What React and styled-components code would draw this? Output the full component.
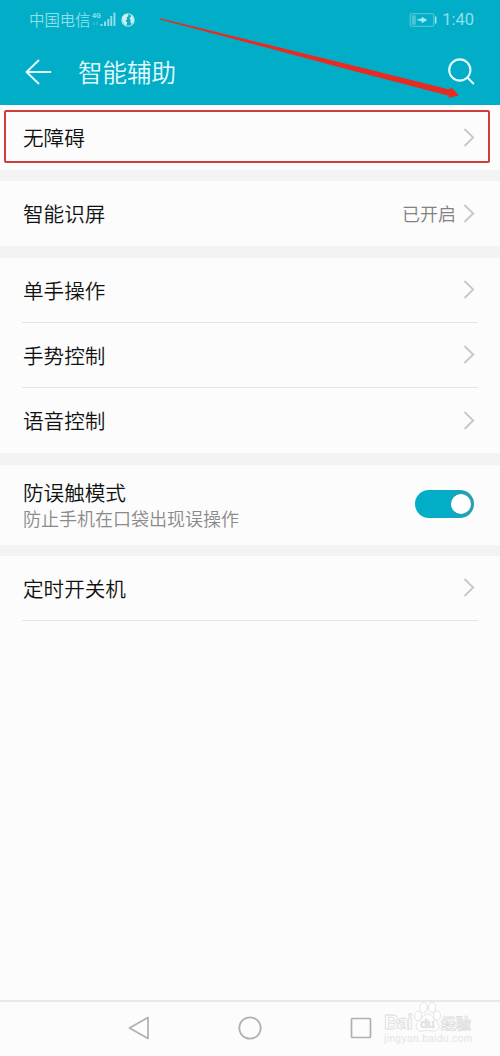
import React, { useState } from 'react'
import styled, { createGlobalStyle } from 'styled-components'

const GlobalStyle = createGlobalStyle`
  * {
    box-sizing: border-box;
  }
  body {
    margin: 0;
    background: #fcfcfc;
    font-family: 'Noto Sans CJK SC', sans-serif;
  }
`

const Screen = styled.div`
  position: relative;
  display: flex;
  flex-direction: column;
  width: 500px;
  height: 1056px;
  overflow: hidden;
  background: #fcfcfc;
`

const Header = styled.header`
  height: 105px;
  background: #02adc7;
  color: #e4fbfd;
`

const StatusBar = styled.div`
  display: flex;
  align-items: center;
  height: 39px;
  padding: 0 26px 0 29px;
  color: #8fe0ea;
`

const Carrier = styled.span`
  width: 63px;
  padding-bottom: 2px;
  font-size: 15.4px;
  font-weight: 350;
  line-height: 20px;
  white-space: nowrap;
`

const Clock = styled.span`
  margin-left: 5px;
  font-family: Roboto, sans-serif;
  font-size: 16.5px;
  line-height: 20px;
`

const Spacer = styled.div`
  flex: 1;
`

const TitleBar = styled.div`
  display: flex;
  align-items: center;
  height: 66px;
  padding: 0 25px 1px 24px;
`

const Title = styled.h1`
  flex: 1;
  margin: 0 0 0 26px;
  font-size: 24.5px;
  font-weight: 350;
  line-height: 36px;
`

const Group = styled.section`
  padding: 0 22px;
  border-top: ${props => props.gap || 0}px solid #f3f3f3;
`

const Row = styled.div`
  display: flex;
  align-items: center;
  height: ${props => props.height}px;
  padding-right: ${props => props.inset || 0}px;
  padding-bottom: ${props => props.lift || 0}px;
  border-bottom: ${props => (props.line ? '1.5px solid #e5e5e5' : 'none')};
`

const Texts = styled.div`
  flex: 1;
  padding-bottom: ${props => props.lift || 0}px;
`

const Label = styled.div`
  padding-left: 1px;
  font-size: 20.6px;
  font-weight: 350;
  line-height: 28px;
  color: #111;
`

const Hint = styled.div`
  padding-left: 1px;
  font-size: 18px;
  font-weight: 350;
  line-height: 25px;
  color: #8a8a8a;
`

const Value = styled.span`
  margin-right: 7px;
  padding-bottom: 2px;
  font-size: 18px;
  font-weight: 350;
  line-height: 26px;
  color: #828282;
`

const Toggle = styled.button`
  display: flex;
  align-items: center;
  justify-content: ${props => (props.on ? 'flex-end' : 'flex-start')};
  width: 59px;
  height: 28px;
  padding: 0 3px;
  border: 0;
  border-radius: 14px;
  background: ${props => (props.on ? 'linear-gradient(90deg, #02adc7 50%, #2b9ead)' : '#c8c8c8')};
`

const Knob = styled.span`
  width: 20px;
  height: 20px;
  border-radius: 50%;
  background: #fff;
`

const NavBar = styled.nav`
  display: flex;
  align-items: center;
  justify-content: center;
  gap: 87px;
  height: 56px;
  margin-top: auto;
  padding-bottom: 2px;
  border-top: 2px solid #e8e8e8;
`

const Highlight = styled.div`
  position: absolute;
  left: 4px;
  top: 110px;
  width: 486px;
  height: 53px;
  border: 2px solid #d03c38;
  border-radius: 2px;
`

const Pointer = styled.svg`
  position: absolute;
  left: 158px;
  top: 16px;
`

const Watermark = styled.svg`
  position: absolute;
  left: 383px;
  top: 1001px;
`

function SignalIcon() {
  return (
    <svg width="24" height="20" viewBox="0 0 24 20" fill="#8fe0ea">
      <text x="0" y="7.5" fontFamily="Roboto, sans-serif" fontSize="7" fontWeight="700">4G</text>
      <path d="M2 12v3M5 12v3" stroke="#4cc5d6" strokeWidth="1" />
      <path d="M8.5 14h2v2h-2zM12 11.500h2v4.500h-2zM15.300 9h1.900v7h-1.900zM18.300 6h1.900v10h-1.900zM21.500 2.500h1.900V16h-1.900z" />
    </svg>
  )
}

function GlobeIcon() {
  return (
    <svg width="14" height="14" viewBox="0 0 14 14" style={{ marginLeft: 5 }}>
      <circle cx="7" cy="7" r="6.200" fill="#17a9c0" stroke="#a5e8ef" strokeWidth="1.100" />
      <path d="M1 4.500 3.500 1.500 6.700 1 7.500 3 5.500 4.400 6.200 6.200 4.500 7.600 6.200 9.800 5.500 12.800 3 11 1.200 7.500z" fill="#c5f3f7" />
      <path d="M9.500 1.500 12.500 4.500 13 8 11 11.300 9.300 9 9.800 7 8.300 5.300 10 3.800z" fill="#c5f3f7" />
    </svg>
  )
}

function BatteryIcon() {
  return (
    <svg width="28" height="14" viewBox="0 0 28 14" fill="none">
      <rect x="1.200" y="0.700" width="23.600" height="12.600" rx="1.500" stroke="#5ccbd9" strokeWidth="1.100" />
      <rect x="2.800" y="2.300" width="4" height="9.400" fill="#4dc5d5" />
      <path d="M7.500 7 13 5v-1.300L18.300 7l-5.500 3.300V8.500z" fill="#a1e8ef" />
      <path d="M26.700 3.500v7" stroke="#a1e8ef" strokeWidth="1.500" />
    </svg>
  )
}

function BackIcon() {
  return (
    <svg width="28" height="28" viewBox="0 0 28 28" fill="none" stroke="currentColor" strokeWidth="1.900" strokeLinecap="round" strokeLinejoin="round">
      <path d="M14.500 2.500 2.500 14l12 11.500M2.500 14H26.500" />
    </svg>
  )
}

function SearchIcon() {
  return (
    <svg width="28" height="28" viewBox="0 0 28 28" fill="none" stroke="currentColor" strokeWidth="2.100" strokeLinecap="round">
      <circle cx="12.800" cy="12" r="10.600" />
      <path d="M20.300 19.500l6 6" />
    </svg>
  )
}

function Chevron() {
  return (
    <svg width="12" height="20" viewBox="0 0 12 20" fill="none" stroke="#c6c6c6" strokeWidth="1.800">
      <path d="M1.500 1 10.200 9.500 1.500 18" />
    </svg>
  )
}

function ArrowRow({ label, value, line, height }) {
  return (
    <Row height={height} line={line} inset={3}>
      <Texts lift={line ? 0 : 2}>
        <Label>{label}</Label>
      </Texts>
      {value && <Value>{value}</Value>}
      <Chevron />
    </Row>
  )
}

function BrandMark() {
  return (
    <Watermark width="94" height="46" viewBox="0 0 94 46" fill="#fefefe" stroke="#dcdcdc" strokeWidth="0.800">
      <g fontFamily="Liberation Sans, sans-serif" fontWeight="700">
        <text x="1" y="28" fontSize="20.500" textLength="29">Bai</text>
        <text x="58" y="27.500" fontSize="15" fontFamily="Noto Sans CJK SC, sans-serif" textLength="30">经验</text>
        <ellipse cx="35" cy="15" rx="3.600" ry="4.800" />
        <ellipse cx="40.500" cy="6.500" rx="3.700" ry="5" />
        <ellipse cx="49" cy="6.500" rx="3.700" ry="5" />
        <ellipse cx="54" cy="14.500" rx="3.500" ry="4.700" />
        <path d="M44.500 13c-4 0-5 4-8 6.500-3 2.500-4.500 5.500-2.500 8.500 2.500 3.500 7 1.500 10.500 1.500s8 2 10.500-1.500c2-3 .5-6-2.500-8.500-3-2.500-4-6.500-8-6.500z" />
        <text x="37" y="27" fontSize="13" fill="#e6e6e6" strokeWidth="0.400" textLength="15">du</text>
      </g>
      <text x="1" y="41" fill="#e3e3e3" stroke="none" fontSize="10" fontFamily="Liberation Sans, sans-serif" textLength="88">jingyan.baidu.com</text>
    </Watermark>
  )
}

function App() {
  const [guardOn, setGuardOn] = useState(true)

  return (
    <>
      <GlobalStyle />
      <Screen>
        <Header>
          <StatusBar>
            <Carrier>中国电信</Carrier>
            <SignalIcon />
            <GlobeIcon />
            <Spacer />
            <BatteryIcon />
            <Clock>1:40</Clock>
          </StatusBar>
          <TitleBar>
            <BackIcon />
            <Title>智能辅助</Title>
            <SearchIcon />
          </TitleBar>
        </Header>

        <Group>
          <ArrowRow label="无障碍" height={65} />
        </Group>
        <Group gap={11}>
          <ArrowRow label="智能识屏" value="已开启" height={65} />
        </Group>
        <Group gap={12}>
          <ArrowRow label="单手操作" height={65} line />
          <ArrowRow label="手势控制" height={65} line />
          <ArrowRow label="语音控制" height={65} />
        </Group>
        <Group gap={12}>
          <Row height={80} inset={4} lift={2}>
            <Texts>
              <Label>防误触模式</Label>
              <Hint>防止手机在口袋出现误操作</Hint>
            </Texts>
            <Toggle on={guardOn} onClick={() => setGuardOn(!guardOn)}>
              <Knob />
            </Toggle>
          </Row>
        </Group>
        <Group gap={11}>
          <ArrowRow label="定时开关机" height={65} line />
        </Group>

        <NavBar>
          <svg width="24" height="24" viewBox="0 0 24 24" fill="none" stroke="#b0b0b0" strokeWidth="1.700" strokeLinejoin="round">
            <path d="M21 1.500v21L2.500 12z" />
          </svg>
          <svg width="24" height="24" viewBox="0 0 24 24" fill="none" stroke="#b0b0b0" strokeWidth="1.700">
            <circle cx="12" cy="12" r="10.700" />
          </svg>
          <svg width="24" height="24" viewBox="0 0 24 24" fill="none" stroke="#b0b0b0" strokeWidth="1.700">
            <rect x="2.500" y="2.500" width="19" height="19" rx="1" />
          </svg>
        </NavBar>

        <Highlight />
        <Pointer width="302" height="84" viewBox="158 16 302 84" fill="#ea2a20">
          <path d="M160 18.300 250 40.300 350 64.800 448 89.300 452 88 459 95.500 448 98 449 95.800 350 70 250 43.200 160 19.500z" />
        </Pointer>
        <BrandMark />
      </Screen>
    </>
  )
}

export default App
